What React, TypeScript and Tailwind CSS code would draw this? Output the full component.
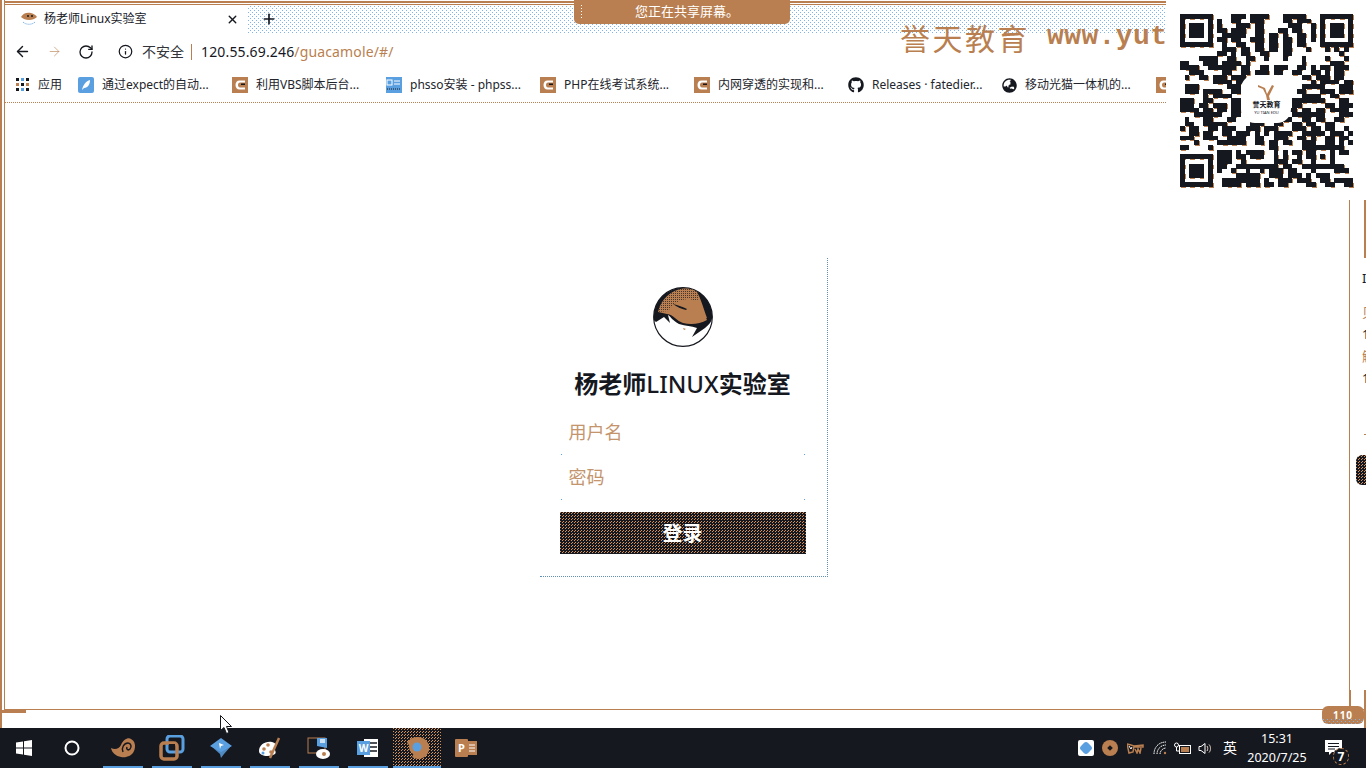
import React from "react";
import { ArrowLeft, ArrowRight, RotateCw, Info, X, Plus } from "lucide-react";
import { FaGithub, FaGlobeAsia } from "react-icons/fa";

const B = "#b97f50";
const D = "#16181f";
const L = "#5a9fe0";

const QR = [
"0000000000011101111000111110000000000",
"0000000010011001110000110111000000000",
"0000000010001110110000011100100000000",
"0000000011011100110001101100100000000",
"0000000001111100110110100110100000000",
"0000000011011001110110110110100000000",
"0000000001001100110110110110000000000",
"0000000001110110110110110001000101010",
"0000000011010110011000110000000000100",
"0000111100110011001000100010000100010",
"1100011101111010000000000010000011100",
"1111001111110110011011100110101101110",
"0011100001100110111011001100110101100",
"0100110111011100000000000011011101100",
"0000000111101111000000000000101111011",
"0111000000111000000000000011111000111",
"0111011110011000000000000110001110111",
"0000010111100000000000000011110011000",
"1110011000011100000000001111111000110",
"1110110111011000000000001100000110111",
"1111011011011000000000011011011011110",
"0001111110011000000000001111111000111",
"0100011000110000000000110011011001100",
"0110011111000001110011001101100110000",
"1011001101110011101110001110110110010",
"0011011001101110101011110011111011101",
"1110011100111100110011100110100110110",
"0001000011111100110110110011100110101",
"1100001000000000000110000011111111100",
"0000000011101011110010101101100000110",
"0000000011101101110010100101100000000",
"0000000011100100000011101100100000000",
"0000000011001111111110110011100001100",
"0000000010010010010111011000100001110",
"0000000000001111100111011101011100000",
"0000000001111111101001110111001101111",
"0000000001111011101101100001100110011",
];

function cell(r: number, c: number) {
  const f = (r0: number, c0: number) => {
    const a = r - r0, b = c - c0;
    if (a < 0 || b < 0 || a > 6 || b > 6) return null;
    if (a === 0 || a === 6 || b === 0 || b === 6) return true;
    if (a === 1 || a === 5 || b === 1 || b === 5) return false;
    return true;
  };
  const fp = f(0, 0) ?? f(0, 30) ?? f(30, 0);
  if (fp !== null) return fp;
  if ((r === 7 && c < 7) || (c === 7 && r < 7)) return false;
  const a = r - 28, b = c - 28;
  if (a >= 0 && b >= 0 && a <= 4 && b <= 4) {
    if (a === 0 || a === 4 || b === 0 || b === 4) return true;
    return a === 2 && b === 2;
  }
  return QR[r]?.[c] === "1";
}

function QrCode() {
  const under: React.ReactNode[] = [];
  const over: React.ReactNode[] = [];
  const s = 4.68;
  for (let r = 0; r < 37; r++)
    for (let c = 0; c < 37; c++)
      if (cell(r, c)) {
        if ((r * 7 + c * 3) % 2 === 0)
          under.push(<rect key={r + "-" + c} x={c * s + 1} y={r * s + 1} width={s} height={s} fill={B} />);
        over.push(<rect key={r + "-" + c} x={c * s} y={r * s} width={s + 0.1} height={s + 0.1} fill={D} />);
      }
  return (
    <svg width="175" height="175" viewBox="0 0 175 175" shapeRendering="crispEdges">
      {under}
      {over}
      <rect x="61" y="61" width="50" height="48" rx="14" fill="#fff" shapeRendering="auto" />
      <path d="M78 71l7 3 2 6 5-9 2 1-5 10 1 4h-3l-1-5-3-6-5-2z" fill={B} shapeRendering="auto" />
    </svg>
  );
}

function Csdn() {
  return (
    <svg width="16" height="16" viewBox="0 0 16 16" className="shrink-0">
      <rect width="16" height="16" fill={B} />
      <path d="M13 3.500H7.500C5 3.500 3.500 5.500 3.500 8s1.500 4.500 4 4.500H13v-2H8c-1.200 0-2-1-2-2.500s.8-2.500 2-2.500h5z" fill="#fff" />
      <path d="M9 6.500h4v1.500H9z" fill={D} />
    </svg>
  );
}

const dots = "bg-[radial-gradient(circle_at_1.5px_1.5px,#7db5ec_0.6px,transparent_0.6px),radial-gradient(circle_at_3.5px_3.5px,#7db5ec_0.6px,transparent_0.6px)] bg-[length:4px_4px]";
const brownDots = "bg-[radial-gradient(circle_at_0.5px_0.5px,#d8935a_0.7px,transparent_0.7px),radial-gradient(circle_at_2.5px_1.5px,#d8935a_0.7px,transparent_0.7px)] bg-[length:3px_3px]";

function Bm({ icon, text, w = "w-[154px]" }: { icon: React.ReactNode; text: string; w?: string }) {
  return (
    <div className={`${w} shrink-0 flex items-center gap-2 overflow-hidden`}>
      {icon}
      <span className="text-[12px] leading-[16px] text-[#23252c] whitespace-nowrap">{text}</span>
    </div>
  );
}

function Slot({ children, bar, active }: { children: React.ReactNode; bar?: boolean; active?: boolean }) {
  return (
    <div className="relative w-[49px] h-full flex items-center justify-center">
      {active && <div className={`absolute inset-y-0 left-[1px] right-0 ${brownDots}`} />}
      <div className="relative">{children}</div>
      {bar && <div className={`absolute bottom-0 h-[2px] bg-[#5a9fe0] ${active ? "left-[1px] right-0" : "left-[5px] right-[4px]"}`} />}
    </div>
  );
}

export default function App() {
  return (
    <div className="relative w-[1366px] h-[768px] overflow-hidden bg-white font-['Noto_Sans','Noto_Sans_CJK_SC',sans-serif] text-[#16181f]">
      <div className="h-[728px] border-l-2 border-[#b97f50] flex flex-col">
        <div className="ml-[2px] h-[710px] border-l border-b border-[#b97f50] flex flex-col">
          {/* browser chrome */}
          <div className="relative w-[1161px] shrink-0 flex flex-col">
            <div className="mt-[1px] h-[2px] bg-[#b97f50]" />
            <div className="mt-[1px] h-[1px] bg-[#b97f50]" />
            <div className={`h-[28px] flex items-center ${dots}`}>
              <div className="w-[243px] h-full bg-white flex items-center pl-[15px] pr-[9px]">
                <svg width="18" height="16" viewBox="0 0 18 16" className="shrink-0">
                  <path d="M1 6c2-4 6-5 10-4 3 1 5 2 6 4-2 2-5 3-8 3-3 0-6-1-8-3z" fill={B} />
                  <circle cx="8" cy="5" r="1" fill={D} />
                  <circle cx="12" cy="5" r="1" fill={D} />
                  <path d="M3 11c3 3 9 3 12 0" stroke={L} strokeWidth="1" strokeDasharray="1 1" fill="none" />
                </svg>
                <span className="ml-[6px] text-[12px] leading-[16px] whitespace-nowrap">杨老师Linux实验室</span>
                <X size={13} strokeWidth={2.5} className="ml-auto text-[#16181f]" />
              </div>
              <Plus size={16} strokeWidth={2.5} className="ml-[13px]" />
            </div>
            <div className="h-[37px] flex items-center">
              <ArrowLeft size={17} strokeWidth={2} className="ml-[9px]" />
              <ArrowRight size={15} strokeWidth={1} className="ml-[16px] text-[#b97f50]" />
              <RotateCw size={16} strokeWidth={2} className="ml-[16px]" />
              <Info size={15} strokeWidth={2} className="ml-[24px]" />
              <span className="ml-[9px] text-[14px] leading-[18px] whitespace-nowrap text-[#33343a]">不安全</span>
              <div className="ml-[7px] w-px h-[16px] bg-[#b97f50]" />
              <span className="ml-[9px] text-[14px] leading-[18px] tracking-[0.15px] whitespace-nowrap">
                120.55.69.246<span className="text-[#b97f50]">/guacamole/#/</span>
              </span>
            </div>
            <div className="h-[33px] pb-[2px] flex items-center border-b border-dotted border-[#b97f50] pl-[11px] overflow-hidden">
              <Bm w="w-[62px]" icon={
                <svg width="14" height="14" viewBox="0 0 14 14" className="shrink-0">
                  {[0, 5, 10].map((y) => [0, 5, 10].map((x) => <rect key={x + "-" + y} x={x} y={y} width="3" height="3" fill={(x + y) % 10 === 0 ? D : (x === 5 ? L : B)} />))}
                </svg>} text="应用" />
              <Bm icon={
                <svg width="16" height="16" viewBox="0 0 16 16" className="shrink-0">
                  <rect width="16" height="16" rx="2" fill={L} />
                  <path d="M4 13c1-5 4-9 8-10 0 4-2 8-6 8z" fill="#fff" />
                </svg>} text="通过expect的自动..." />
              <Bm icon={<Csdn />} text="利用VBS脚本后台..." />
              <Bm icon={
                <svg width="16" height="16" viewBox="0 0 16 16" className="shrink-0">
                  <rect width="16" height="16" fill={L} />
                  <rect x="1" y="3" width="5" height="5" fill="none" stroke="#fff" />
                  <path d="M8 4h6M8 7h6" stroke="#fff" />
                  <path d="M1 12h14" stroke={D} strokeDasharray="1 1" />
                </svg>} text="phsso安装 - phpss..." />
              <Bm icon={<Csdn />} text="PHP在线考试系统..." />
              <Bm icon={<Csdn />} text="内网穿透的实现和..." />
              <Bm icon={<FaGithub size={16} className="shrink-0" />} text="Releases · fatedier..." />
              <Bm icon={<FaGlobeAsia size={15} className="shrink-0" />} text="移动光猫一体机的..." />
              <Csdn />
            </div>

            {/* sharing banner */}
            <div className="absolute left-[569px] top-0 w-[216px] h-[24px] bg-[#b97f50] rounded-b-[5px] flex items-center justify-center pl-[10px] pb-[2px]">
              <div className="absolute left-[6px] top-[4px] w-[4px] h-[15px] bg-[radial-gradient(#ffffff_0.8px,transparent_0.8px)] bg-[length:3px_3px]" />
              <span className="text-[13px] leading-[18px] text-white">您正在共享屏幕。</span>
            </div>
            {/* watermark */}
            <div className="absolute left-[895px] top-[18px] w-[266px] h-[38px] overflow-hidden flex items-center whitespace-nowrap text-[#b97f50]">
              <span className="text-[30px] leading-[38px] tracking-[2.5px] font-['Noto_Sans_CJK_SC',serif]">誉天教育</span>
              <span className="ml-[17px] text-[28px] leading-[38px] tracking-[0.4px] font-bold font-['Liberation_Mono',monospace]">www.yut</span>
            </div>
          </div>

          {/* page body */}
          <div className="flex-1 flex min-h-0">
            <div className="flex-1 pl-[535px] pt-[155px]">
              <div className="w-[288px] h-[319px] border-r border-b border-dotted border-[#5f8fb5] flex flex-col items-center pr-[2px]">
                <svg width="60" height="60" viewBox="0 0 60 60" className="mt-[29px] shrink-0">
                  <defs>
                    <pattern id="hatdots" width="2" height="2" patternUnits="userSpaceOnUse">
                      <rect width="1" height="1" fill={D} />
                    </pattern>
                  </defs>
                  <circle cx="30" cy="30" r="29.300" fill="#fff" stroke={D} strokeWidth="1.200" />
                  <path d="M.7 30A29.300 29.300 0 0 1 59.300 30C59 34 56 38 52 41L39 50 44 41C38 39 33 39 26 37 20 34 18 30 15 28L17 36 11 30 3 35 .7 33z" fill={D} />
                  <path d="M5 25C8 12 18 3 30 1.500 37 1 42 3 44 5 48 12 50 20 54 31L30 30 14 27z" fill={B} />
                  <path d="M5 25C8 12 18 3 30 1.500 37 1 42 3 44 5 46 10 46 14 42 14 34 11 24 14 15 24z" fill="url(#hatdots)" opacity=".7" />
                  <path d="M17 22C22 14 30 12 37 12 44 14 50 22 54 33 47 37 38 38 30 36 24 34 20 28 14 26z" fill={B} />
                  <path d="M20 17c5 1 10 3 14 5l-1 1c-5-1-9-3-13-6z" fill={D} />
                  <path d="M30 41l3 1-2 1z" fill={B} />
                </svg>
                <div className="mt-[21px] h-[32px] text-[24px] leading-[32px] font-bold whitespace-nowrap">
                  杨老师<span className="font-medium">LINUX</span>实验室
                </div>
                <div className="mt-[10px] w-[246px] flex flex-col">
                  <input placeholder="用户名" className="h-[44px] w-full pl-[9px] bg-transparent text-[18px] outline-none placeholder:text-[#c4946d]" />
                  <div className="h-px flex justify-between px-px"><i className="w-px h-px bg-[#5a9fe0]" /><i className="w-px h-px bg-[#5a9fe0]" /></div>
                  <input placeholder="密码" className="h-[44px] w-full pl-[9px] bg-transparent text-[18px] outline-none placeholder:text-[#c4946d]" />
                  <div className="h-px flex justify-between px-px"><i className="w-px h-px bg-[#5a9fe0]" /><i className="w-px h-px bg-[#5a9fe0]" /></div>
                  <button className={`mt-[12px] h-[42px] pt-[2px] bg-[#16181f] ${brownDots} text-white text-[20px] font-bold leading-none`}>登录</button>
                </div>
              </div>
            </div>
            {/* clipped neighbouring window at the right edge */}
            <div className="w-[17px] shrink-0 mt-[97px] border-l border-[#b97f50] overflow-hidden flex flex-col text-[13px] leading-[22px]">
              <div className="ml-[14px] w-[2px] h-[58px] bg-[#b97f50] shrink-0" />
              <div className="pl-[12px] mt-[9px] flex flex-col whitespace-nowrap">
                <span>I</span>
                <span className="mt-[12px] text-[#b97f50]">贝</span>
                <span>1</span>
                <span className="text-[#b97f50]">解</span>
                <span>1</span>
              </div>
              <div className="ml-[14px] mt-[45px] w-[2px] h-px bg-[#b97f50]" />
              <div className={`ml-[6px] mt-[20px] w-[11px] h-[30px] rounded-l-[6px] bg-[#16181f] ${brownDots} shrink-0`} />
            </div>
          </div>
        </div>
        <div className="w-[24px] h-[3px] bg-[#b97f50]" />
      </div>

      {/* taskbar */}
      <div className="h-[40px] bg-[#16181f] flex items-center text-white">
        <div className="w-[48px] h-full flex items-center justify-center">
          <svg width="16" height="16" viewBox="0 0 16 16"><path d="M0 2.500l7-1v6H0zM8 1.300l8-1.300v7.500H8zM0 8.500h7v6l-7-1zM8 8.500h8V16l-8-1.300z" fill="#fff" /></svg>
        </div>
        <div className="w-[50px] h-full flex items-center justify-center pr-[2px]">
          <svg width="16" height="16" viewBox="0 0 16 16"><circle cx="8" cy="8" r="6.500" fill="none" stroke="#fff" strokeWidth="2" /></svg>
        </div>
        <Slot bar>
          <svg width="26" height="22" viewBox="0 0 26 22">
            <path d="M1 11c4 2 8 1 10-3C13 3 18 0 21 2c4 2 5 7 3 12-2 5-8 7-13 6-5-1-9-4-10-9z" fill={B} />
            <path d="M13 15c-2-4 1-9 5-9 3 0 4 4 2 6-2 2-4 0-3-2" fill="none" stroke={D} strokeWidth="1.500" />
          </svg>
        </Slot>
        <Slot bar>
          <svg width="26" height="26" viewBox="0 0 26 26">
            <rect x="8" y="1" width="16" height="16" rx="3" fill="none" stroke={L} strokeWidth="3" />
            <rect x="2" y="8" width="16" height="16" rx="3" fill="none" stroke={B} strokeWidth="3.500" />
            <rect x="10" y="9" width="6" height="6" fill={D} />
          </svg>
        </Slot>
        <Slot bar>
          <svg width="24" height="22" viewBox="0 0 24 22">
            <path d="M12 12l-10-3 9 8 1 4 3-4 7-8z" fill={L} opacity=".85" />
            <path d="M12 1L1 9l11 6 11-6z" fill={L} />
            <path d="M10 6l5 2-3 1-1 3z" fill="#fff" />
          </svg>
        </Slot>
        <Slot bar>
          <svg width="24" height="24" viewBox="0 0 24 24">
            <path d="M1 15C1 9 7 5 14 6c4 1 5 4 3 6-1 2 2 4 0 6-4 3-16 3-16-3z" fill="#fff" />
            <circle cx="6" cy="13" r="1.800" fill={B} /><circle cx="10" cy="9" r="1.800" fill={B} /><circle cx="5" cy="17" r="1.500" fill={L} /><circle cx="13" cy="16" r="1.800" fill={B} />
            <path d="M12 22L21 2" stroke={B} strokeWidth="2.500" />
          </svg>
        </Slot>
        <Slot bar>
          <svg width="24" height="24" viewBox="0 0 24 24">
            <rect x="1" y="2" width="17" height="15" fill={D} stroke={B} />
            <path d="M10 2h10v10l-10-2z" fill={L} /><path d="M13 3h5v4h-5z" fill="#fff" opacity=".7" />
            <ellipse cx="16" cy="18" rx="7" ry="5" fill="#fff" />
            <circle cx="17" cy="18" r="2" fill={B} />
          </svg>
        </Slot>
        <Slot bar>
          <svg width="22" height="20" viewBox="0 0 22 20">
            <rect x="7" y="1" width="14" height="18" fill="#fff" />
            <path d="M13 5h7M13 9h7M13 13h7" stroke={D} strokeWidth="1.500" />
            <rect x="0" y="3" width="13" height="14" fill={L} />
            <text x="6.500" y="14" fontSize="10" fontWeight="700" fill="#fff" textAnchor="middle">W</text>
          </svg>
        </Slot>
        <Slot bar active>
          <svg width="24" height="24" viewBox="0 0 24 24">
            <path d="M12 1a11 11 0 1 1-5 20L9 17A6 6 0 1 0 6 11L2 7A11 11 0 0 1 12 1z" fill={B} />
            <circle cx="12" cy="11" r="8" fill={B} />
            <circle cx="12" cy="11" r="4.500" fill={L} />
          </svg>
        </Slot>
        <Slot>
          <svg width="22" height="20" viewBox="0 0 22 20">
            <rect x="9" y="3" width="13" height="14" fill={B} />
            <path d="M14 7h6M14 10h6M14 13h6" stroke="#fff" />
            <rect x="0" y="1" width="13" height="18" rx="1" fill={B} />
            <text x="6.500" y="14" fontSize="11" fontWeight="700" fill="#fff" textAnchor="middle">P</text>
          </svg>
        </Slot>

        <div className="ml-auto h-full flex items-center">
          <div className="w-[24px] flex justify-center">
            <div className="w-[16px] h-[16px] rounded-[2px] bg-white flex items-center justify-center">
              <div className="w-[10px] h-[10px] rounded-[3px] rotate-45 bg-[#5a9fe0]" />
            </div>
          </div>
          <div className="w-[24px] flex justify-center">
            <div className="w-[16px] h-[16px] rounded-full bg-[#b97f50] flex items-center justify-center">
              <div className="w-[4px] h-[4px] bg-[#16181f] rotate-45" />
            </div>
          </div>
          <div className="w-[26px] flex justify-center">
            <svg width="17" height="12" viewBox="0 0 17 12">
              <path d="M0 2l4 1 3 1-1 6-4 1zM7 4l9-1v2H7zM8 7l2 4 1-4 2 4 1-5" fill="none" stroke={B} strokeWidth="1.500" />
              <path d="M2 4l2 3 1-2" stroke="#fff" fill="none" />
            </svg>
          </div>
          <div className="w-[24px] flex justify-center">
            <svg width="14" height="14" viewBox="0 0 14 14" fill="none" stroke="#fff">
              <path d="M1 13C1 6 6 1 13 1" strokeDasharray="1.500 .7" />
              <path d="M4 13C4 8 8 4 13 4" strokeDasharray="1.500 .7" />
              <path d="M7 13C7 10 10 7 13 7" strokeDasharray="1.500 .7" />
              <circle cx="12" cy="12" r="1.200" fill={B} stroke="none" />
            </svg>
          </div>
          <div className="w-[20px] flex justify-center">
            <svg width="17" height="13" viewBox="0 0 17 13">
              <rect x="5.500" y="3.500" width="11" height="8" fill="none" stroke="#fff" />
              <rect x="7" y="5" width="8" height="5" fill={B} />
              <circle cx="2.500" cy="3" r="2" fill="none" stroke="#fff" />
              <path d="M2.500 5v4h3" stroke="#fff" fill="none" />
            </svg>
          </div>
          <div className="w-[26px] flex justify-center">
            <svg width="14" height="13" viewBox="0 0 14 13" fill="none" stroke="#fff">
              <path d="M1 4.500h2l4-3v10l-4-3H1z" />
              <path d="M9 4c1 1.500 1 3.500 0 5M11 2.500c2 2 2 6 0 8" stroke="#e8d6c6" />
            </svg>
          </div>
          <div className="w-[24px] text-center text-[14px] leading-[18px]">英</div>
          <div className="w-[70px] flex flex-col items-center text-[12.500px] leading-[19px] whitespace-nowrap">
            <span>15:31</span>
            <span>2020/7/25</span>
          </div>
          <div className="relative w-[36px] h-full mr-[18px]">
            <svg className="absolute left-[13px] top-[12px]" width="17" height="16" viewBox="0 0 17 16">
              <path d="M0 0h17v12H7l-3 3v-3H0z" fill="#fff" />
              <path d="M3 3.500h11M3 6.500h11M3 9h7" stroke={D} />
            </svg>
            <div className="absolute left-[21px] top-[20px] w-[16px] h-[17px] rounded-full border border-dashed border-[#b97f50] bg-[#16181f] text-[12px] leading-[15px] font-bold text-center">7</div>
          </div>
        </div>
      </div>

      {/* QR overlay */}
      <div className="absolute left-[1180px] top-[14px]">
        <QrCode />
        <div className="absolute left-[72px] w-[29px] top-[87px] text-center text-[7px] leading-[8px] font-bold whitespace-nowrap">誉天教育</div>
        <div className="absolute left-[72px] w-[29px] top-[97px] text-center text-[4px] leading-[4px] whitespace-nowrap">YU TIAN EDU</div>
      </div>

      {/* remote desktop zoom badge */}
      <div className="absolute left-[1322px] top-[706px] w-[42px] h-[18px] rounded-[6px] bg-[#b97f50] flex items-center justify-center text-white text-[10px] font-bold leading-none tracking-[1px] overflow-hidden">
        <div className={`absolute left-0 right-0 bottom-0 h-[6px] ${dots}`} />
        <span className="relative">110</span>
      </div>
      <div className="absolute left-[1364px] top-[690px] w-[2px] h-[38px] bg-[#b97f50]" />
      <div className="absolute left-[1349px] top-[690px] w-[2px] h-[16px] bg-[#b97f50]" />

      {/* mouse pointer */}
      <svg className="absolute left-[220px] top-[715px]" width="13" height="20" viewBox="0 0 13 20">
        <path d="M.5.500v15l3.500-3 2.500 6 2.500-1-2.500-6h5z" fill="#fff" stroke="#16181f" />
      </svg>
    </div>
  );
}
